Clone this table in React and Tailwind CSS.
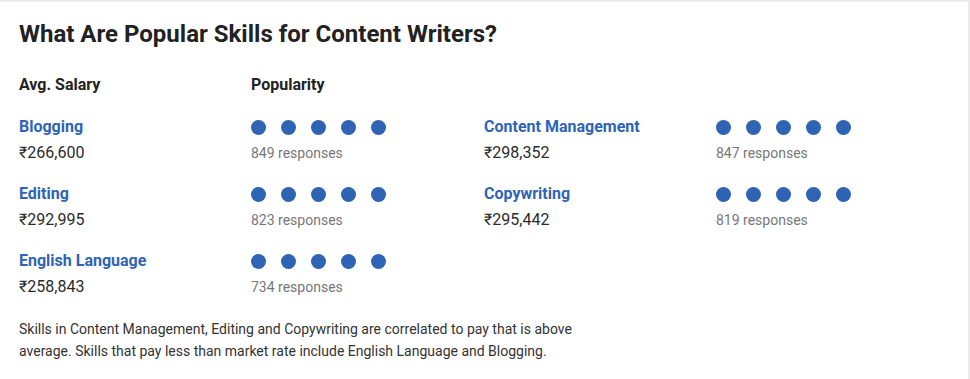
const skills = [
  { name: 'Blogging', salary: '₹266,600', responses: 849 },
  { name: 'Content Management', salary: '₹298,352', responses: 847 },
  { name: 'Editing', salary: '₹292,995', responses: 823 },
  { name: 'Copywriting', salary: '₹295,442', responses: 819 },
  { name: 'English Language', salary: '₹258,843', responses: 734 },
];

function Dots() {
  return (
    <div className="flex gap-[15px] h-[20px] items-center">
      {[0, 1, 2, 3, 4].map((i) => (
        <span key={i} className="w-[15px] h-[15px] rounded-full bg-[#2f64b5]" />
      ))}
    </div>
  );
}

function SkillRow({ skill }) {
  return (
    <div className="grid grid-cols-[232px_1fr] h-[67px]">
      <div>
        <div className="text-[16px] leading-[20px] font-bold text-[#2f64b5]">{skill.name}</div>
        <div className="text-[16px] leading-[20px] mt-[6px] text-[#2b2b2b]">{skill.salary}</div>
      </div>
      <div>
        <Dots />
        <div className="text-[14px] leading-[20px] mt-[6px] text-[#777]">{skill.responses} responses</div>
      </div>
    </div>
  );
}

export default function App() {
  return (
    <div className="w-[970px] h-[379px] bg-white font-['Roboto',sans-serif] border-t-2 border-r-2 border-[#ebebeb] pl-[19px] pt-[17px]">
      <h2 className="text-[24px] leading-[30px] font-bold text-[#222]">What Are Popular Skills for Content Writers?</h2>

      <div className="grid grid-cols-[232px_1fr] mt-[26px] text-[16px] leading-[20px] font-bold text-[#222]">
        <div>Avg. Salary</div>
        <div>Popularity</div>
      </div>

      <div className="grid grid-cols-[465px_465px] mt-[22px]">
        {skills.map((s) => (
          <SkillRow key={s.name} skill={s} />
        ))}
      </div>

      <p className="w-[580px] text-[14px] leading-[22px] text-[#333]">
        Skills in Content Management, Editing and Copywriting are correlated to pay that is above average. Skills that pay less than market rate include English Language and Blogging.
      </p>
    </div>
  );
}
